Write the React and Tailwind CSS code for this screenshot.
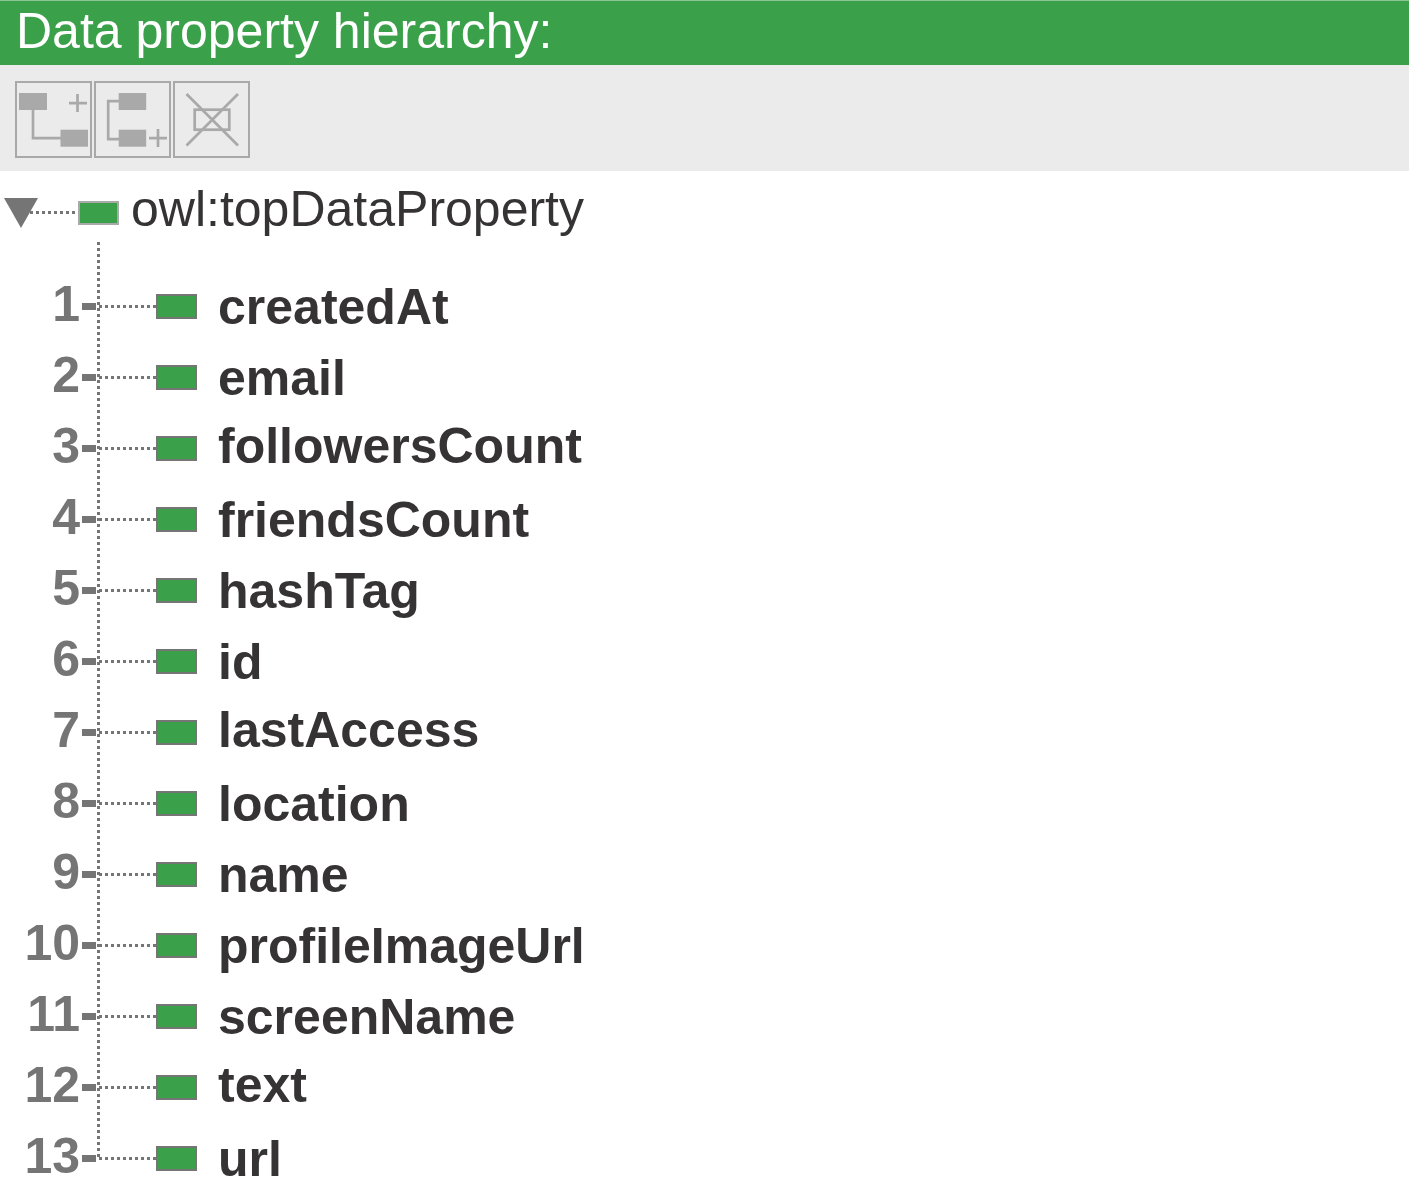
import React, { useState } from "react";

const properties = [
  { name: "createdAt" },
  { name: "email" },
  { name: "followersCount", raised: true },
  { name: "friendsCount" },
  { name: "hashTag" },
  { name: "id" },
  { name: "lastAccess", raised: true },
  { name: "location" },
  { name: "name" },
  { name: "profileImageUrl" },
  { name: "screenName" },
  { name: "text", raised: true },
  { name: "url" },
];

function ToolButton({ label, viewBox, children }) {
  return (
    <button
      type="button"
      aria-label={label}
      className="size-[77px] shrink-0 border-2 border-[#a9a9a9]"
    >
      <svg viewBox={viewBox} className="block size-full" fill="none" stroke="#a9a9a9" strokeWidth="2.7">
        {children}
      </svg>
    </button>
  );
}

function Toolbar() {
  return (
    <div role="toolbar" aria-label="Data property actions" className="flex gap-0.5 bg-[#ebebeb] pt-4 pb-[13px] pl-[15px]">
      <ToolButton label="Add sub property" viewBox="17 83 73 73">
        <rect x="19" y="93" width="28" height="17" fill="#a9a9a9" stroke="none" />
        <rect x="60.5" y="129.7" width="27.5" height="17" fill="#a9a9a9" stroke="none" />
        <path d="M33 109V138.2H61M77.5 94v18M69 103.2h18" />
      </ToolButton>
      <ToolButton label="Add sibling property" viewBox="96 83 73 73">
        <rect x="118.7" y="93" width="27.5" height="17" fill="#a9a9a9" stroke="none" />
        <rect x="118.7" y="129.7" width="27.5" height="17" fill="#a9a9a9" stroke="none" />
        <path d="M119 101.2H108.2V139.2H119M158 129v18M149 138.2h18" />
      </ToolButton>
      <ToolButton label="Delete property" viewBox="175 83 73 73">
        <rect x="194.7" y="109.7" width="34.6" height="20" />
        <path d="M186.5 94L238 145.5M238 94L186.5 145.5" />
      </ToolButton>
    </div>
  );
}

function DottedLine({ className }) {
  return (
    <span
      aria-hidden="true"
      className={`h-[3px] shrink-0 bg-[repeating-linear-gradient(to_right,#757575_0_3px,transparent_3px_6px)] ${className}`}
    />
  );
}

function PropertyRow({ index, name, raised }) {
  return (
    <li className="flex h-9 items-center leading-[33px] font-bold">
      <span className="w-20 shrink-0 self-start text-right text-[#757575]">{index}</span>
      <span aria-hidden="true" className="ml-0.5 h-[7px] w-3.5 shrink-0 bg-[#757575]" />
      <DottedLine className="ml-[3px] w-[57px]" />
      <span aria-hidden="true" className="h-[25px] w-[41px] shrink-0 border-2 border-[#757575] bg-[#3aa14a]" />
      <span className={`ml-[21px] ${raised ? "self-start" : "self-end"}`}>{name}</span>
    </li>
  );
}

export default function App() {
  const [open, setOpen] = useState(true);
  return (
    <main className="overflow-hidden bg-white font-['Liberation_Sans',Arial,sans-serif] text-[50px] text-[#353334]">
      <h1 className="border-t border-[#8cc796] bg-[#3aa14a] pb-1 pl-4 leading-[60px] text-white">
        Data property hierarchy:
      </h1>
      <Toolbar />
      <div className="flex h-[71px] items-center pt-3 pl-1">
        <button
          type="button"
          aria-label="Toggle owl:topDataProperty"
          aria-expanded={open}
          onClick={() => setOpen(!open)}
          className="shrink-0"
        >
          <svg viewBox="0 0 34 30" className="block h-[30px] w-[34px]" fill="#757575">
            <path d="M0 0H34L17 30Z" />
          </svg>
        </button>
        <DottedLine className="-ml-2 w-12" />
        <span aria-hidden="true" className="h-6 w-[41px] shrink-0 border-2 border-[#a9a9a9] bg-[#3aa14a]" />
        <span className="mb-2 ml-3 leading-[50px]">owl:topDataProperty</span>
      </div>
      {open && (
        <ol className="flex flex-col gap-[35px] bg-[repeating-linear-gradient(to_bottom,#757575_0_3px,transparent_3px_6px)] bg-[length:3px_calc(100%-18px)] bg-[position:97px_0] bg-no-repeat pt-[46px]">
          {properties.map((property, i) => (
            <PropertyRow key={property.name} index={i + 1} name={property.name} raised={property.raised} />
          ))}
        </ol>
      )}
    </main>
  );
}
